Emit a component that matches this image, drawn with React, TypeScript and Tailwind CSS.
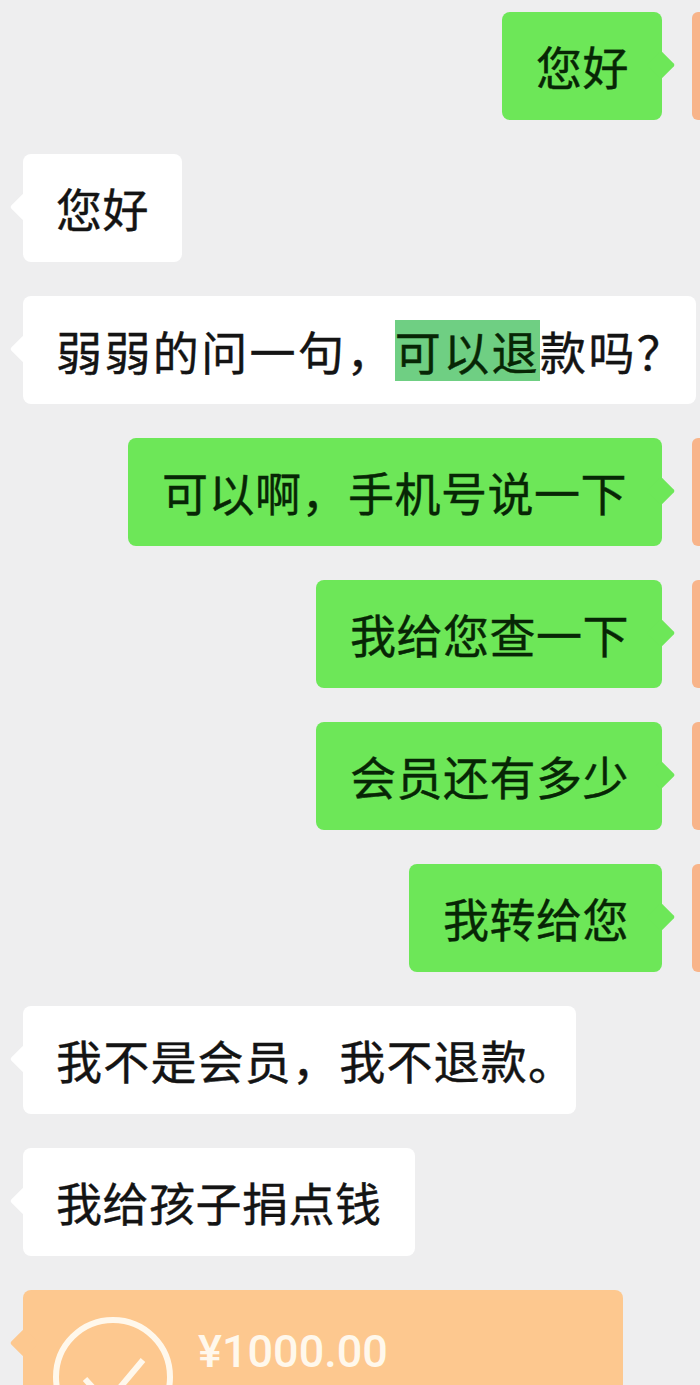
const font = "font-['Noto_Sans_CJK_SC','Noto_Sans',sans-serif]";

type Message = { side: 'left' | 'right'; text: string; extra?: string };

const before: Message[] = [
    { side: 'right', text: '您好' },
    { side: 'left', text: '您好' },
];

const after: Message[] = [
    { side: 'right', text: '可以啊，手机号说一下', extra: 'w-[534px]' },
    { side: 'right', text: '我给您查一下' },
    { side: 'right', text: '会员还有多少' },
    { side: 'right', text: '我转给您' },
    { side: 'left', text: '我不是会员，我不退款。', extra: 'w-[553px] pb-[3px] tracking-[1.2px]' },
    { side: 'left', text: '我给孩子捐点钱', extra: 'pb-[3px]' },
];

function Bubble({
    side,
    extra = '',
    children,
}: {
    side: 'left' | 'right';
    extra?: string;
    children: React.ReactNode;
}) {
    if (side === 'right') {
        return (
            <div className="flex justify-end">
                <div
                    className={`relative flex h-[108px] items-center whitespace-nowrap rounded-[8px] bg-[#6de758] pr-[33px] pb-[3px] pl-[34px] text-[46px] leading-none tracking-[0.5px] text-[#072605] [-webkit-text-stroke:0.4px_#072605] ${extra}`}
                >
                    {children}
                    <span className="absolute top-[43px] right-[-9px] h-[20px] w-[20px] rotate-45 rounded-[2px] bg-[#6de758]" />
                </div>
                <div className="ml-[30px] h-[108px] w-[8px] rounded-l-[6px] bg-[#f8b48a]" />
            </div>
        );
    }
    return (
        <div className="flex justify-start pl-[23px]">
            <div
                className={`relative flex h-[108px] items-center whitespace-nowrap rounded-[8px] bg-white px-[33px] text-[46px] leading-none tracking-[0.5px] text-[#141414] [-webkit-text-stroke:0.4px_#141414] ${extra}`}
            >
                {children}
                <span className="absolute top-[43px] left-[-9px] h-[20px] w-[20px] rotate-45 rounded-[2px] bg-white" />
            </div>
        </div>
    );
}

export default function App() {
    return (
        <div className={`${font} flex h-[1385px] w-[700px] flex-col gap-[34px] overflow-hidden bg-[#eeeeef] pt-[12px]`}>
            {before.map((m, i) => (
                <Bubble key={i} side={m.side} extra={m.side === 'left' ? 'pb-[3px]' : m.extra}>
                    {m.text}
                </Bubble>
            ))}

            <Bubble side="left" extra="w-[673px] tracking-[2.4px]">
                弱弱的问一句，
                <span className="inline-block bg-[#6fcf83] leading-[61px] text-[#072605] [-webkit-text-stroke:0.4px_#072605]">
                    可以退
                </span>
                款吗？
            </Bubble>

            {after.map((m, i) => (
                <Bubble key={i} side={m.side} extra={m.extra}>
                    {m.text}
                </Bubble>
            ))}

            {/* transfer card, cut off by the bottom of the page */}
            <div className="pl-[23px]">
                <div className="relative flex h-[130px] w-[600px] items-start gap-[25px] rounded-[8px] bg-[#fdc88f] pt-[27px] pl-[30px]">
                    <span className="absolute top-[43px] left-[-9px] h-[20px] w-[20px] rotate-45 rounded-[2px] bg-[#fdc88f]" />
                    <svg width="120" height="120" viewBox="0 0 120 120" fill="none" className="shrink-0">
                        <circle cx="60" cy="60" r="57" stroke="#fff8ec" strokeWidth="6" />
                        <path d="M32 62 L54 86 L90 43" stroke="#fff8ec" strokeWidth="6" />
                    </svg>
                    <div className="mt-[12px] font-['Roboto',sans-serif] text-[45px] leading-none font-medium text-[#fff8ec]">
                        ¥1000.00
                    </div>
                </div>
            </div>
        </div>
    );
}
